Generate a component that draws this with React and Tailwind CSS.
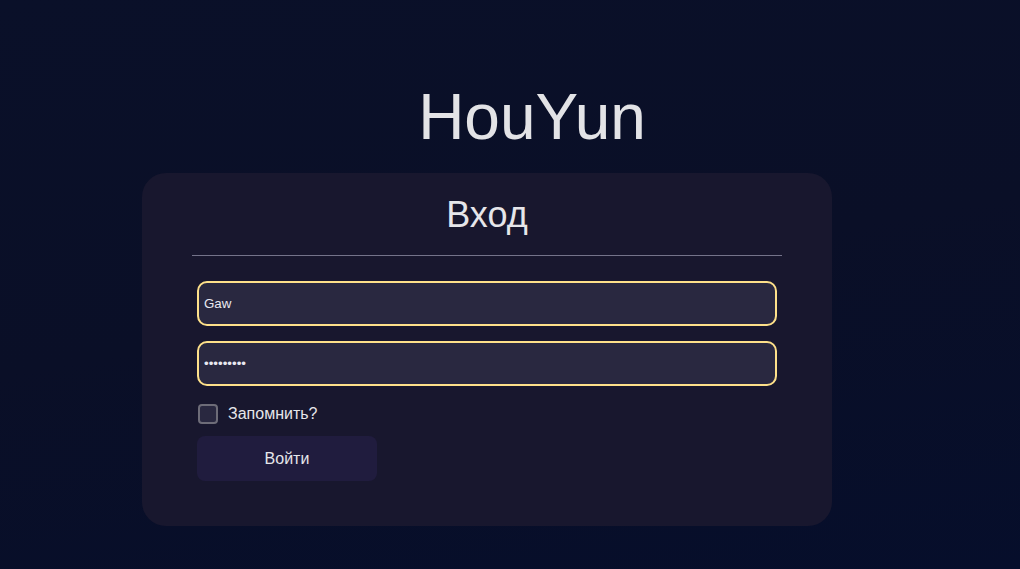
import React from "react";

export default function App() {
  return (
    <div
      className="w-[1020px] h-[569px] overflow-hidden bg-[linear-gradient(170deg,#0a1029_0%,#0a0f27_50%,#060e2b_100%)]"
      style={{ fontFamily: '"Liberation Sans", Arial, sans-serif' }}
    >
      <div className="pt-[74px] pl-[44px] text-center">
        <h1 className="text-[64px] leading-[86px] text-[#e3e3e6] font-normal">HouYun</h1>
      </div>
      <div className="ml-[142px] mt-[13px] w-[690px] h-[353px] rounded-[24px] bg-[#18172e] px-[50px] pt-[20px]">
        <h2 className="text-center text-[36px] leading-[44px] text-[#e6e6ea] font-normal">Вход</h2>
        <div className="mt-[18px] h-px bg-[#74738a]" />
        <div className="pl-[5px] pr-[4px] pt-[25px]">
          <input
            type="text"
            defaultValue="Gaw"
            className="block w-[580px] h-[45px] rounded-[10px] border-2 border-[#fde08a] bg-[#292840] px-[5px] text-[13.33px] text-[#e8e8f0] outline-none"
            style={{ fontFamily: '"Liberation Sans", Arial, sans-serif' }}
          />
          <input
            type="password"
            defaultValue="gawgawgaw"
            className="block mt-[15px] w-[580px] h-[45px] rounded-[10px] border-2 border-[#fde08a] bg-[#292840] px-[5px] text-[13.33px] text-[#e8e8f0] outline-none"
            style={{ fontFamily: '"Liberation Sans", Arial, sans-serif' }}
          />
          <label className="mt-[18px] flex items-center gap-[10px]">
            <span className="ml-px w-[20px] h-[20px] rounded-[4px] border-2 border-[#6d6c78] bg-[#292840]" />
            <span className="text-[16px] leading-[20px] text-[#e6e6ea]">Запомнить?</span>
          </label>
          <button className="mt-[12px] w-[180px] h-[45px] rounded-[8px] bg-[#201c3e] text-[16px] text-[#e6e6ea]">
            Войти
          </button>
        </div>
      </div>
    </div>
  );
}
